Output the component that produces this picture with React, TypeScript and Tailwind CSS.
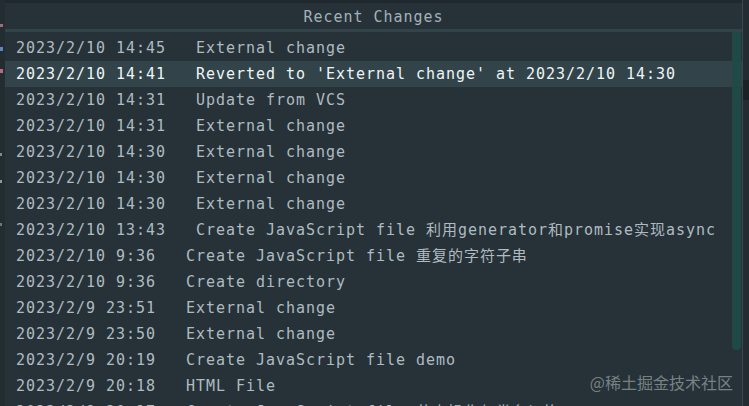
const rows = [
  ['2023/2/10 14:45', 'External change'],
  ['2023/2/10 14:41', "Reverted to 'External change' at 2023/2/10 14:30"],
  ['2023/2/10 14:31', 'Update from VCS'],
  ['2023/2/10 14:31', 'External change'],
  ['2023/2/10 14:30', 'External change'],
  ['2023/2/10 14:30', 'External change'],
  ['2023/2/10 14:30', 'External change'],
  ['2023/2/10 13:43', 'Create JavaScript file 利用generator和promise实现async'],
  ['2023/2/10 9:36', 'Create JavaScript file 重复的字符子串'],
  ['2023/2/10 9:36', 'Create directory'],
  ['2023/2/9 23:51', 'External change'],
  ['2023/2/9 23:50', 'External change'],
  ['2023/2/9 20:19', 'Create JavaScript file demo'],
  ['2023/2/9 20:18', 'HTML File'],
  ['2023/2/9 20:17', 'Create JavaScript file 节点操作与类名切换'],
]

const selected = 1

export default function App() {
  return (
    <div className="w-[749px] h-[406px] overflow-hidden flex bg-[#1e282d] font-['DejaVu_Sans_Mono','Noto_Sans_CJK_SC',monospace]">
      {/* Window behind, left edge */}
      <div className="w-[5px] shrink-0 flex flex-col bg-[#222c31]">
        <div className="h-[24px]" />
        <div className="h-[3px] w-[3px] bg-[#a06a86]" />
        <div className="h-[20px]" />
        <div className="h-[4px] w-[3px] bg-[#5f86c4]" />
        <div className="h-[18px]" />
        <div className="h-[4px] w-[3px] bg-[#b86a7e]" />
        <div className="h-[80px]" />
        <div className="h-[3px] w-[2px] bg-[#7e8a90]" />
        <div className="h-[24px]" />
        <div className="h-[3px] w-[2px] bg-[#8e989d]" />
        <div className="h-[40px]" />
        <div className="h-[3px] w-[2px] bg-[#6c787e]" />
      </div>

      {/* Popup */}
      <div className="flex-1 flex flex-col pt-[3px] min-w-0">
        <div className="h-[26px] shrink-0 flex items-center justify-center pt-[2px] bg-[#263238] text-[15px] tracking-[0.97px] text-[#a3b1b8]">
          Recent Changes
        </div>
        <div className="h-[3px] shrink-0 bg-[#33434a]" />
        <div className="relative flex-1 min-h-0 overflow-hidden bg-[#263238] pt-[3px]">
          {rows.map(([date, desc], i) => (
            <div
              key={i}
              className={`h-[26px] flex items-center pl-[11px] whitespace-pre text-[15px] tracking-[0.97px] ${
                i === selected ? 'bg-[#32444a] text-[#eef5f7]' : 'text-[#aebbc1]'
              }`}
            >
              {date + '   ' + desc}
            </div>
          ))}

          {/* Scrollbar */}
          <div className="absolute right-[1px] top-0 w-[9px] h-[318px] rounded-b-[4px] bg-[#1f4b47]/90" />

          {/* Watermark */}
          <div className="absolute right-[9px] top-[338px] text-[16px] text-[#8d989d]/80 font-['Noto_Sans_CJK_SC',sans-serif]">
            @稀土掘金技术社区
          </div>
        </div>
      </div>

      {/* Window behind, right edge */}
      <div className="w-[7px] shrink-0 border-l border-[#3a474d] bg-[#222c31] flex flex-col">
        <div className="h-[80px]" />
        <div className="h-[20px] bg-[#1a2226]" />
      </div>
    </div>
  )
}
